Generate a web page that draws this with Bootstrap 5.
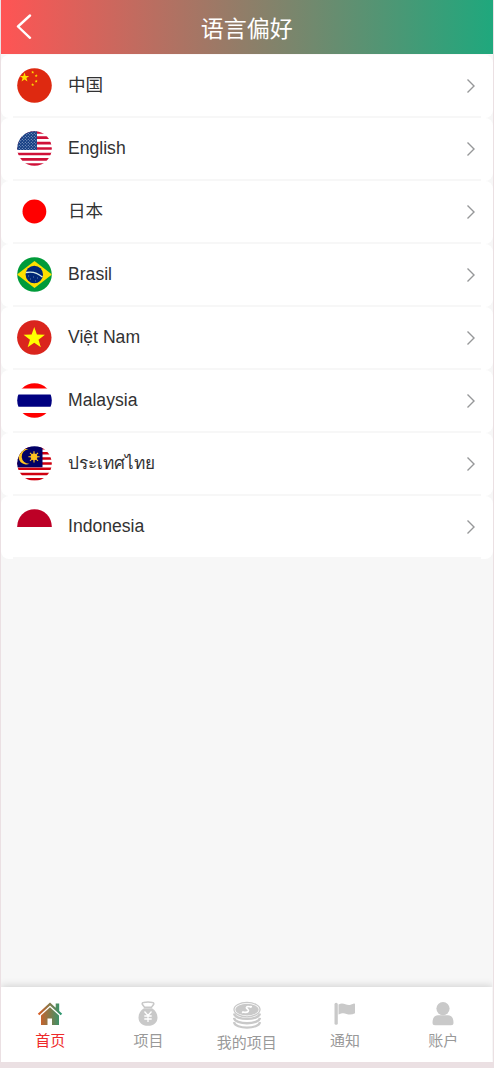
<!DOCTYPE html>
<html lang="zh">
<head>
<meta charset="utf-8">
<meta name="viewport" content="width=device-width, initial-scale=1">
<title>语言偏好</title>
<link href="https://cdn.jsdelivr.net/npm/bootstrap@5.3.0/dist/css/bootstrap.min.css" rel="stylesheet">
<style>
body{background:#ebe0e3;font-family:"Liberation Sans","Noto Sans CJK SC",sans-serif;color:#323233;overflow:hidden}
.app{width:491.5px;height:1062px;margin-left:1px;background:#f7f7f7}
.topbar{height:54px;flex:none;padding:0 15px;background:linear-gradient(90deg,#ff5454,#1fa87d)}
.topbar h1{font-size:23px;line-height:52px;padding-bottom:1px;font-weight:400;color:#fff}
.side{width:18px}
.langs{border-top:1px solid #fbf8f8}
.lang{height:63px;padding:0 16.500px 2px 15.500px;background:#fff;border-radius:8px;color:#323233;position:relative}
.lang::after{content:"";position:absolute;left:12px;right:12px;bottom:0;height:2px;background:#f7f7f7}
.lang .flag{width:35px;height:35px;margin-right:16.500px}
.lang .name{font-size:17.600px;line-height:24px;margin-top:-1px}
.lang .cjk{margin-top:-3px}
.lang .thai{font-size:17.200px}
.cjk{font-family:"Noto Sans CJK SC",sans-serif;font-weight:400}
.tabs{height:75px;flex:none;background:#fff;box-shadow:0 -1px 8px rgba(0,0,0,.16);clip-path:inset(-12px 0 0 0)}
.tab{color:#999;font-size:15px;line-height:20px;padding-top:14px;font-family:"Noto Sans CJK SC",sans-serif;font-weight:400}
.tab svg{margin-bottom:3px}
.tab.current{color:#ee2a2a}
</style>
</head>
<body>
<svg width="0" height="0" class="position-absolute" aria-hidden="true">
<defs>
<clipPath id="disc"><circle cx="17.5" cy="17.5" r="17.3"/></clipPath>
<linearGradient id="warm"><stop stop-color="#df5a22"/><stop offset="1" stop-color="#259a73"/></linearGradient>
<pattern id="dots" width="3" height="3" patternUnits="userSpaceOnUse"><circle cx=".8" cy=".8" r=".55" fill="#b8c4de"/><circle cx="2.3" cy="2.3" r=".55" fill="#b8c4de"/></pattern>
<symbol id="star" viewBox="-10 -10 20 20"><path d="M0-10 2.35-3.24 9.51-3.09 3.8 1.24 5.88 8.09 0 4-5.88 8.09-3.8 1.24-9.51-3.09-2.35-3.24Z"/></symbol>
<symbol id="chev" viewBox="0 0 10 16"><path d="M1.500 1.500 8 8 1.500 14.500" fill="none" stroke="#969799" stroke-width="1.4"/></symbol>
</defs>
</svg>
<div class="app d-flex flex-column">
<header class="topbar d-flex justify-content-between align-items-center">
<svg class="side" width="18" height="26" viewBox="0 0 18 26"><path d="M14 1.500 2 12.500 14 23.800" fill="none" stroke="#fff" stroke-width="2.400" stroke-linecap="round" stroke-linejoin="round"/></svg>
<h1 class="m-0 cjk">语言偏好</h1><span class="side"></span>
</header>
<main class="langs d-flex flex-column flex-grow-1">
<a class="lang d-flex align-items-center text-decoration-none"><svg class="flag" viewBox="0 0 35 35"><g clip-path="url(#disc)"><path fill="#de2910" d="M0 0h35v35H0z"/><g fill="#ffde00"><use href="#star" x="2.500" y="4.500" width="10" height="10"/><use href="#star" x="14" y="2.500" width="3.400" height="3.400"/><use href="#star" x="17.500" y="6" width="3.400" height="3.400"/><use href="#star" x="17.500" y="11.500" width="3.400" height="3.400"/><use href="#star" x="14" y="15" width="3.400" height="3.400"/></g></g></svg><span class="name cjk">中国</span><svg class="ms-auto" width="10" height="16"><use href="#chev"/></svg></a>
<a class="lang d-flex align-items-center text-decoration-none"><svg class="flag" viewBox="0 0 35 35"><g clip-path="url(#disc)"><path fill="#fff" d="M0 0h35v35H0z"/><path d="M0 1.300h35M0 6.700h35M0 12.100h35M0 17.500h35M0 22.900h35M0 28.300h35M0 33.700h35" stroke="#cf1038" stroke-width="2.700"/><path fill="#fff" d="M0 19h35v2.500H0z"/><path fill="#123c82" d="M0 0h20v19H0z"/><path fill="url(#dots)" d="M0 0h20v19H0z"/></g></svg><span class="name">English</span><svg class="ms-auto" width="10" height="16"><use href="#chev"/></svg></a>
<a class="lang d-flex align-items-center text-decoration-none"><svg class="flag" viewBox="0 0 35 35"><circle cx="17.400" cy="17.500" r="11.900" fill="red"/></svg><span class="name cjk">日本</span><svg class="ms-auto" width="10" height="16"><use href="#chev"/></svg></a>
<a class="lang d-flex align-items-center text-decoration-none"><svg class="flag" viewBox="0 0 35 35"><g clip-path="url(#disc)"><path fill="#009b3a" d="M0 0h35v35H0z"/><path fill="#fedf00" d="M0 17.500 17.500 4 35 17.500 17.500 31z"/><circle cx="17.300" cy="17.500" r="8.700" fill="#002776"/><path d="M9 15.500q9-2 16.400 4.500" fill="none" stroke="#d9eee8" stroke-width="1.300"/><path d="M11 19h1m1 3h1m2-2h1m1 4h1m1-3h1" stroke="#7892b5" stroke-width=".8"/></g></svg><span class="name">Brasil</span><svg class="ms-auto" width="10" height="16"><use href="#chev"/></svg></a>
<a class="lang d-flex align-items-center text-decoration-none"><svg class="flag" viewBox="0 0 35 35"><circle cx="17.300" cy="17.500" r="17.200" fill="#da251d"/><use href="#star" x="6" y="7" width="22.500" height="22.500" fill="#ff0"/></svg><span class="name">Việt Nam</span><svg class="ms-auto" width="10" height="16"><use href="#chev"/></svg></a>
<a class="lang d-flex align-items-center text-decoration-none"><svg class="flag" viewBox="0 0 35 35"><g clip-path="url(#disc)"><path fill="red" d="M0 0h35v5.500H0zM0 30h35v5H0z"/><path fill="#000080" d="M0 11.500h35v12.300H0z"/></g></svg><span class="name">Malaysia</span><svg class="ms-auto" width="10" height="16"><use href="#chev"/></svg></a>
<a class="lang d-flex align-items-center text-decoration-none"><svg class="flag" viewBox="0 0 35 35"><g clip-path="url(#disc)"><path fill="#fff" d="M0 0h35v35H0z"/><path d="M0 2.200h35M0 7.300h35M0 12.400h35M0 17.500h35M0 22.800h35M0 28h35M0 33.200h35" stroke="#d00010" stroke-width="2.500"/><path fill="#010066" d="M0 0h25.500v21.200H0z"/><path fill="#fdc221" d="M11.500 3.200a7.800 7.800 0 1 0 1 14.600 6.900 6.900 0 1 1-1-14.600z"/><circle cx="17" cy="10.800" r="3.400" fill="#fdc221"/><path d="M17 5.200v11.200M11.400 10.800h11.200M13 6.800l8 8M21 6.800l-8 8" stroke="#fdc221" stroke-width="1.100"/></g></svg><span class="name thai">ประเทศไทย</span><svg class="ms-auto" width="10" height="16"><use href="#chev"/></svg></a>
<a class="lang d-flex align-items-center text-decoration-none"><svg class="flag" viewBox="0 0 35 35"><path clip-path="url(#disc)" fill="#bd0026" d="M0 0h35v18H0z"/></svg><span class="name">Indonesia</span><svg class="ms-auto" width="10" height="16"><use href="#chev"/></svg></a>
</main>
<nav class="tabs d-flex">
<a class="tab current col d-flex flex-column align-items-center text-decoration-none"><svg width="26" height="26" viewBox="0 0 26 26"><path fill="url(#warm)" d="M13 1.500.8 12.700l1.500 1.600L13 4.600l10.700 9.700 1.500-1.600-3-2.800V2.500h-3.500v4.200zM13 6.200 4 14.400V24h6.500v-6.500h4.500V24H22v-9.600z"/></svg><span>首页</span></a>
<a class="tab col d-flex flex-column align-items-center text-decoration-none"><svg width="26" height="26" viewBox="0 0 26 26"><path fill="#c9c9c9" d="M9 7.200h8c3.500 2.200 5.500 5.200 5.500 9.200 0 5-3.500 8.300-9.500 8.300s-9.500-3.300-9.500-8.300c0-4 2-7 5.500-9.200z"/><path d="M9.500 6.200 7.300 3.300q-.5-1.500 1.200-1.800 4.500-1 9 0 1.700.3 1.200 1.800L16.500 6.200z" fill="none" stroke="#c9c9c9" stroke-width="1.500"/><path d="M9.500 10.500 13 14.500l3.500-4M13 14.500v6.500M9.300 15h7.400M9.300 18h7.400" fill="none" stroke="#fff" stroke-width="1.300"/></svg><span>项目</span></a>
<a class="tab col d-flex flex-column align-items-center text-decoration-none"><svg width="30" height="28" viewBox="0 0 30 28"><path fill="none" stroke="#c9c9c9" stroke-width="2.300" d="M2 12.500c1 7.300 25 7.300 26 0M2 16.800c1 7.300 25 7.300 26 0M2 21.100c1 7.300 25 7.300 26 0"/><ellipse cx="15" cy="8.600" rx="13" ry="7.200" fill="#fff" stroke="#c9c9c9" stroke-width="1.300"/><ellipse cx="15" cy="8.600" rx="11.600" ry="5.900" fill="#c9c9c9"/><path d="M19.300 6.300c-2.300-1.300-5.300-.9-4.800.7.500 1.300 3 1.800 1.700 3.400-1.200 1.300-4.200 1.200-5.700.3M19.500 5l-1 1.500M11.500 10.500l-1.300 1.300" fill="none" stroke="#fff" stroke-width="1.700"/></svg><span>我的项目</span></a>
<a class="tab col d-flex flex-column align-items-center text-decoration-none"><svg width="26" height="26" viewBox="0 0 26 26"><rect x="2.500" y="1.800" width="3.300" height="22" rx="1.600" fill="#c9c9c9"/><path fill="#c9c9c9" d="M6.500 3.500c5-3 7.500 1.500 12 .3l3.500-1.300q1-.2 1 .8v9c-3 1.500-5.500 1.700-8.500.6-3-1-5-.5-8 .7z"/></svg><span>通知</span></a>
<a class="tab col d-flex flex-column align-items-center text-decoration-none"><svg width="26" height="26" viewBox="0 0 26 26"><circle cx="13" cy="7.600" r="6.600" fill="#c9c9c9"/><path fill="#c9c9c9" d="M8 14.200h10c3.500 0 5.500 3 5.500 7.500q0 2.500-2.500 2.500H5q-2.500 0-2.500-2.500C2.500 17.200 4.500 14.200 8 14.200z"/></svg><span>账户</span></a>
</nav>
</div>
<script src="https://cdn.jsdelivr.net/npm/bootstrap@5.3.0/dist/js/bootstrap.bundle.min.js"></script>
</body>
</html>
